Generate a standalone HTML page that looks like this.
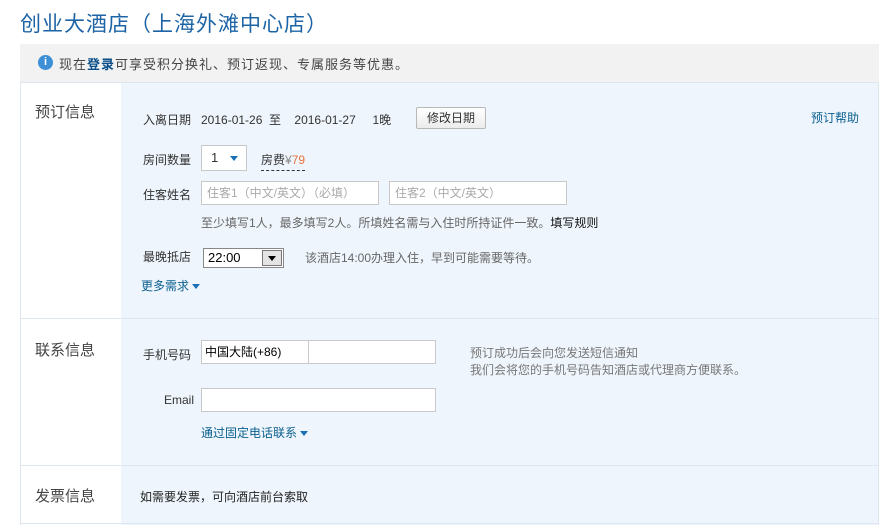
<!DOCTYPE html>
<html><head><meta charset="utf-8"><style>
*{margin:0;padding:0;box-sizing:border-box}
body{width:893px;height:525px;background:#fff;font-family:"Liberation Sans","Noto Sans CJK SC",sans-serif;font-size:12px;color:#333;position:relative;overflow:hidden}
.a{position:absolute;white-space:nowrap}
.inp{position:absolute;background:#fff;border:1px solid #c8c8c8;height:24px;color:#aaa;padding:0 0 0 5px;line-height:22px;font-size:12px}
.blue{color:#0b5f8f}
.tri{display:inline-block;width:0;height:0;border-left:4px solid transparent;border-right:4px solid transparent;border-top:5px solid #1a6fb5;vertical-align:middle;margin-left:3px}
.sec{position:absolute;left:35px;font-size:15px;color:#444}
</style></head><body>
<div class="a" style="left:20px;top:8px;font-size:21px;letter-spacing:1px;color:#1d64a6">创业大酒店（上海外滩中心店）</div>
<div class="a" style="left:20px;top:44px;width:859px;height:38px;background:#f2f2f2"></div>
<div class="a" style="left:38px;top:55px;width:15px;height:15px;border-radius:50%;background:#3d8fd6;color:#fff;font-size:11px;font-weight:bold;text-align:center;line-height:15px">i</div>
<div class="a" style="left:59px;top:54px;font-size:13px;letter-spacing:1px;color:#444">现在<b style="color:#0b4f8a">登录</b>可享受积分换礼、预订返现、专属服务等优惠。</div>
<div class="a" style="left:20px;top:82px;width:859px;height:443px;border:1px solid #dde6ee;border-bottom:none;background:#fff"></div>
<div class="a" style="left:121px;top:83px;width:757px;height:442px;background:#eef5fc"></div>
<div class="a" style="left:21px;top:318px;width:857px;height:1px;background:#dde6ee"></div>
<div class="a" style="left:21px;top:465px;width:857px;height:1px;background:#dde6ee"></div>
<div class="a" style="left:21px;top:523px;width:857px;height:1px;background:#dde6ee"></div>
<div class="sec a" style="top:101px">预订信息</div>
<div class="sec a" style="top:339px">联系信息</div>
<div class="sec a" style="top:485px">发票信息</div>

<div class="a" style="left:143px;top:111px">入离日期&nbsp;&nbsp;&nbsp;2016-01-26&nbsp;&nbsp;至&nbsp;&nbsp;&nbsp;&nbsp;2016-01-27&nbsp;&nbsp;&nbsp;&nbsp;&nbsp;1晚</div>
<div class="a" style="left:416px;top:107px;width:70px;height:22px;border:1px solid #b8b8b8;border-radius:2px;background:linear-gradient(#fff,#ececec);text-align:center;line-height:20px">修改日期</div>
<div class="a blue" style="left:811px;top:109px">预订帮助</div>

<div class="a" style="left:143px;top:151px">房间数量</div>
<div class="a" style="left:201px;top:145px;width:46px;height:26px;border:1px solid #c8c8c8;background:#fff;line-height:24px;padding-left:9px;font-size:13px">1 <span class="tri" style="margin-left:8px"></span></div>
<div class="a" style="left:261px;top:151px;border-bottom:1px dashed #333;padding-bottom:2px">房费<span style="color:#888">¥</span><span style="color:#e8733c">79</span></div>

<div class="a" style="left:143px;top:186px">住客姓名</div>
<div class="inp" style="left:201px;top:181px;width:178px">住客1（中文/英文）（必填）</div>
<div class="inp" style="left:389px;top:181px;width:178px">住客2（中文/英文）</div>
<div class="a" style="left:201px;top:214px;color:#666">至少填写1人，最多填写2人。所填姓名需与入住时所持证件一致。<span style="color:#111">填写规则</span></div>

<div class="a" style="left:143px;top:248px">最晚抵店</div>
<div class="a" style="left:203px;top:248px;width:81px;height:20px;border:1px solid #888;background:#fff;line-height:18px;padding-left:4px;font-size:13px;color:#000">22:00
<span style="position:absolute;right:1px;top:1px;width:20px;height:16px;border:1px solid #777;background:#e4e4e4"><span style="position:absolute;left:5px;top:5px;border-left:4px solid transparent;border-right:4px solid transparent;border-top:5px solid #000"></span></span></div>
<div class="a" style="left:305px;top:249px;color:#666">该酒店14:00办理入住，早到可能需要等待。</div>
<div class="a blue" style="left:141px;top:277px">更多需求<span class="tri"></span></div>

<div class="a" style="left:143px;top:346px">手机号码</div>
<div class="a" style="left:201px;top:340px;width:235px;height:24px;border:1px solid #c8c8c8;background:#fff"><span style="position:absolute;left:0;top:0;width:107px;height:22px;border-right:1px solid #c8c8c8;line-height:22px;padding-left:3px;color:#000">中国大陆(+86)</span></div>
<div class="a" style="left:470px;top:345px;color:#777;line-height:17px">预订成功后会向您发送短信通知<br>我们会将您的手机号码告知酒店或代理商方便联系。</div>
<div class="a" style="left:164px;top:393px">Email</div>
<div class="a" style="left:201px;top:388px;width:235px;height:24px;border:1px solid #c8c8c8;background:#fff"></div>
<div class="a blue" style="left:201px;top:424px">通过固定电话联系<span class="tri"></span></div>

<div class="a" style="left:140px;top:488px;color:#222">如需要发票，可向酒店前台索取</div>
</body></html>
